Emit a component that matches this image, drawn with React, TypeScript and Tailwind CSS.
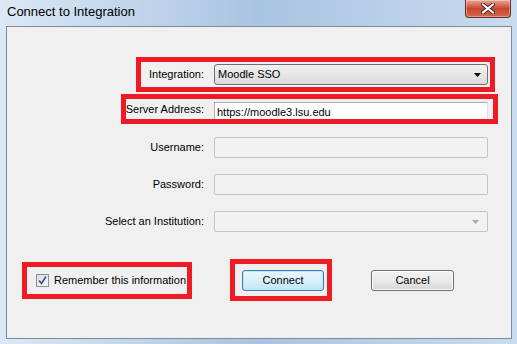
import { useState } from 'react'

const font = { fontFamily: '"Liberation Sans", Arial, sans-serif' }

function Row({ label, children }: { label: string; children: React.ReactNode }) {
  return (
    <div className="flex h-[21px] items-center">
      <span className="w-[198px] pr-[1px] text-right text-[11px] text-black">{label}</span>
      <div className="ml-[9px] h-[21px] w-[274px]">{children}</div>
    </div>
  )
}

function DisabledBox({ arrow }: { arrow?: boolean }) {
  return (
    <div className="flex h-full w-full items-center justify-end rounded-[2px] border border-[#c5c5c5] bg-[#f2f2f2] pr-[8px]">
      {arrow && (
        <svg width="7" height="4" viewBox="0 0 7 4">
          <path d="M0 0h7L3.5 4z" fill="#a8a8a8" />
        </svg>
      )}
    </div>
  )
}

export default function App() {
  const [remember, setRemember] = useState(true)
  const [server, setServer] = useState('https://moodle3.lsu.edu')

  return (
    <div
      className="flex h-[344px] w-[517px] flex-col overflow-hidden bg-gradient-to-r from-[#dbe8f6] via-[#a9c4e1] to-[#c9dcf0]"
      style={font}
    >
      {/* title bar */}
      <div className="flex h-[26px] shrink-0 items-start justify-between">
        <span className="pl-[7px] pt-[4px] text-[13px] leading-[16px] text-black">Connect to Integration</span>
        <button
          type="button"
          className="mr-[6px] flex h-[18px] w-[46px] items-center justify-center rounded-b-[4px] border border-t-0 border-[#6b2a22] bg-gradient-to-b from-[#e9a596] via-[#c9452f] to-[#d2664c] shadow-[inset_0_0_0_1px_rgba(255,255,255,0.35)]"
        >
          <svg width="14" height="11" viewBox="0 0 14 11">
            <path d="M2 1.5L12 9.5M12 1.5L2 9.5" stroke="#3a2a2a" strokeWidth="4" strokeLinecap="square" />
            <path d="M2 1.5L12 9.5M12 1.5L2 9.5" stroke="#ffffff" strokeWidth="2" strokeLinecap="square" />
          </svg>
        </button>
      </div>

      {/* client area */}
      <div className="relative ml-[6px] h-[313px] w-[506px] shrink-0 border border-[#7d8a99] bg-[#f0f0f0]">
        <div className="flex flex-col pt-[37px]">
          <Row label="Integration:">
            <div className="flex h-full w-full items-center justify-between rounded-[3px] border border-[#707070] bg-gradient-to-b from-[#f2f2f2] to-[#dadada] pl-[3px] pr-[6px] text-[11px] text-black">
              <span>Moodle SSO</span>
              <svg width="7" height="4" viewBox="0 0 7 4">
                <path d="M0 0h7L3.5 4z" fill="#000" />
              </svg>
            </div>
          </Row>
          <div className="mt-[14px]">
            <Row label="Server Address:">
              <input
                value={server}
                onChange={(e) => setServer(e.target.value)}
                className="h-full w-full border border-[#abadb3] border-b-[#e3e9ef] border-r-[#dbdfe6] bg-white pl-[2px] text-[11px] text-black outline-none"
              />
            </Row>
          </div>
          <div className="mt-[17px]">
            <Row label="Username:">
              <DisabledBox />
            </Row>
          </div>
          <div className="mt-[16px]">
            <Row label="Password:">
              <DisabledBox />
            </Row>
          </div>
          <div className="mt-[16px]">
            <Row label="Select an Institution:">
              <DisabledBox arrow />
            </Row>
          </div>

          {/* bottom row */}
          <div className="mt-[38px] flex h-[21px] items-center">
            <label className="ml-[29px] flex w-[206px] cursor-default items-center text-[11px] text-black">
              <button
                type="button"
                onClick={() => setRemember(!remember)}
                className="flex h-[13px] w-[13px] items-center justify-center border border-[#8f8f8f] bg-gradient-to-br from-[#dcdcdc] to-[#f8f8f8]"
              >
                {remember && (
                  <svg width="9" height="9" viewBox="0 0 9 9">
                    <path d="M1 4.5L3.5 7.5L8 0.5" stroke="#3a4f9a" strokeWidth="1.6" fill="none" />
                  </svg>
                )}
              </button>
              <span className="ml-[5px]">Remember this information</span>
            </label>
            <button
              type="button"
              className="h-[21px] w-[82px] rounded-[3px] border border-[#3c7fb1] bg-gradient-to-b from-[#eaf6fd] via-[#d9f0fc] to-[#bee6fd] text-[11px] text-black shadow-[inset_0_0_0_1px_#bfe7fb]"
            >
              Connect
            </button>
            <button
              type="button"
              className="ml-[47px] h-[21px] w-[83px] rounded-[3px] border border-[#707070] bg-gradient-to-b from-[#f2f2f2] via-[#ebebeb] to-[#d6d6d6] text-[11px] text-black shadow-[inset_0_0_0_1px_#fcfcfc]"
            >
              Cancel
            </button>
          </div>
        </div>

        {/* red annotation boxes */}
        <div className="pointer-events-none absolute left-[129px] top-[30px] h-[35px] w-[359px] border-[5px] border-[#ed1c24]" />
        <div className="pointer-events-none absolute left-[114px] top-[67px] h-[30px] w-[377px] border-[5px] border-[#ed1c24]" />
        <div className="pointer-events-none absolute left-[15px] top-[235px] h-[37px] w-[170px] border-[5px] border-[#ed1c24]" />
        <div className="pointer-events-none absolute left-[223px] top-[232px] h-[42px] w-[102px] border-[5px] border-[#ed1c24]" />
      </div>
    </div>
  )
}
